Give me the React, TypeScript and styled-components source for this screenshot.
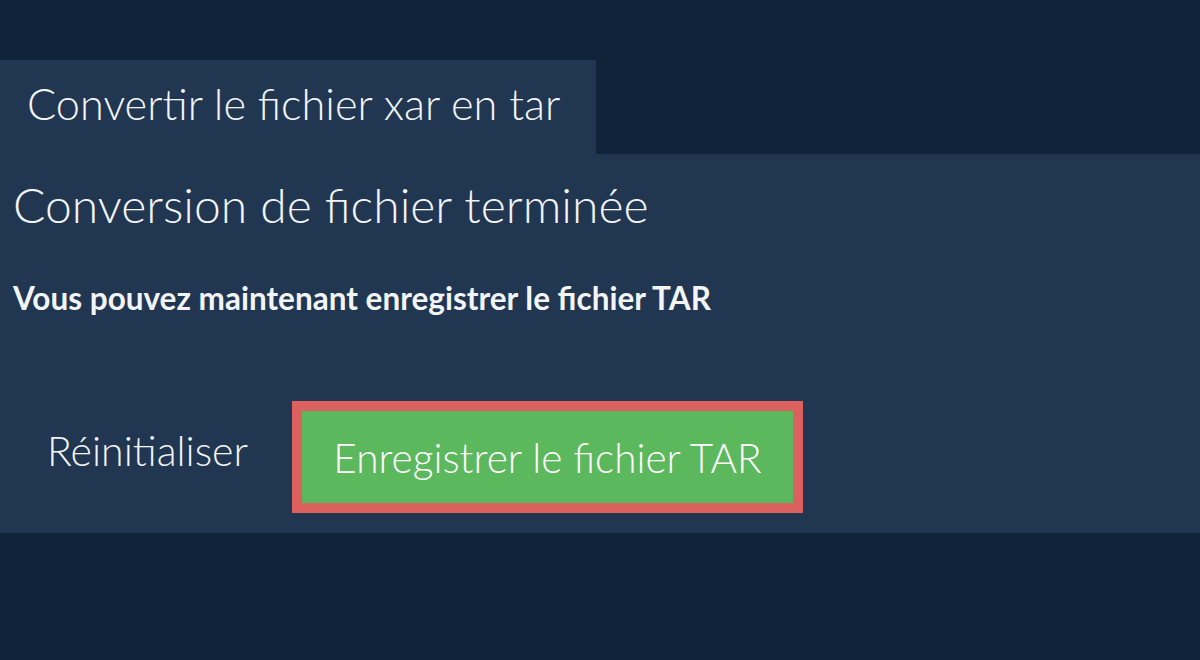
import styled, { createGlobalStyle } from 'styled-components';

const GlobalStyle = createGlobalStyle`
  html, body {
    margin: 0;
    padding: 0;
    background: #0f2339;
  }
  body {
    font-family: Lato, "Open Sans", sans-serif;
    color: #f2f4f6;
  }
`;

function App() {
  return (
    <>
      <GlobalStyle />
      <Page>
        <TabBar>
          <Tab>Convertir le fichier xar en tar</Tab>
        </TabBar>
        <Panel>
          <Heading>Conversion de fichier terminée</Heading>
          <Message>Vous pouvez maintenant enregistrer le fichier TAR</Message>
          <Actions>
            <ResetButton>Réinitialiser</ResetButton>
            <SaveButton>Enregistrer le fichier TAR</SaveButton>
          </Actions>
        </Panel>
      </Page>
    </>
  );
}

export default App;

const Page = styled.div`
  width: 1200px;
  height: 660px;
  padding-top: 60px;
  box-sizing: border-box;
  display: flex;
  flex-direction: column;
`;

const TabBar = styled.div`
  display: flex;
`;

const Tab = styled.div`
  height: 94px;
  width: 596px;
  box-sizing: border-box;
  padding: 0 0 8px 27px;
  display: flex;
  align-items: center;
  background: #213651;
  font-size: 43.3px;
  font-weight: 300;
  white-space: nowrap;
`;

const Panel = styled.div`
  height: 379px;
  box-sizing: border-box;
  background: #213651;
  padding: 23px 13px 0;
  display: flex;
  flex-direction: column;
`;

const Heading = styled.div`
  font-size: 48px;
  font-weight: 300;
  line-height: 56px;
  white-space: nowrap;
`;

const Message = styled.div`
  margin-top: 45px;
  font-size: 31.5px;
  font-weight: 700;
  line-height: 40px;
  white-space: nowrap;
`;

const Actions = styled.div`
  margin-top: 83px;
  display: flex;
  align-items: center;
  gap: 44px;
  padding-left: 34px;
`;

const ResetButton = styled.button`
  border: none;
  background: none;
  padding: 0;
  margin-bottom: 14px;
  color: #f2f4f6;
  font-family: inherit;
  font-size: 41px;
  font-weight: 300;
  white-space: nowrap;
  cursor: pointer;
`;

const SaveButton = styled.button`
  width: 511px;
  height: 112px;
  box-sizing: border-box;
  border: 10px solid #dc605d;
  background: #5cb85c;
  color: #ffffff;
  font-family: inherit;
  font-size: 40.5px;
  font-weight: 300;
  padding: 0;
  white-space: nowrap;
  cursor: pointer;
`;
